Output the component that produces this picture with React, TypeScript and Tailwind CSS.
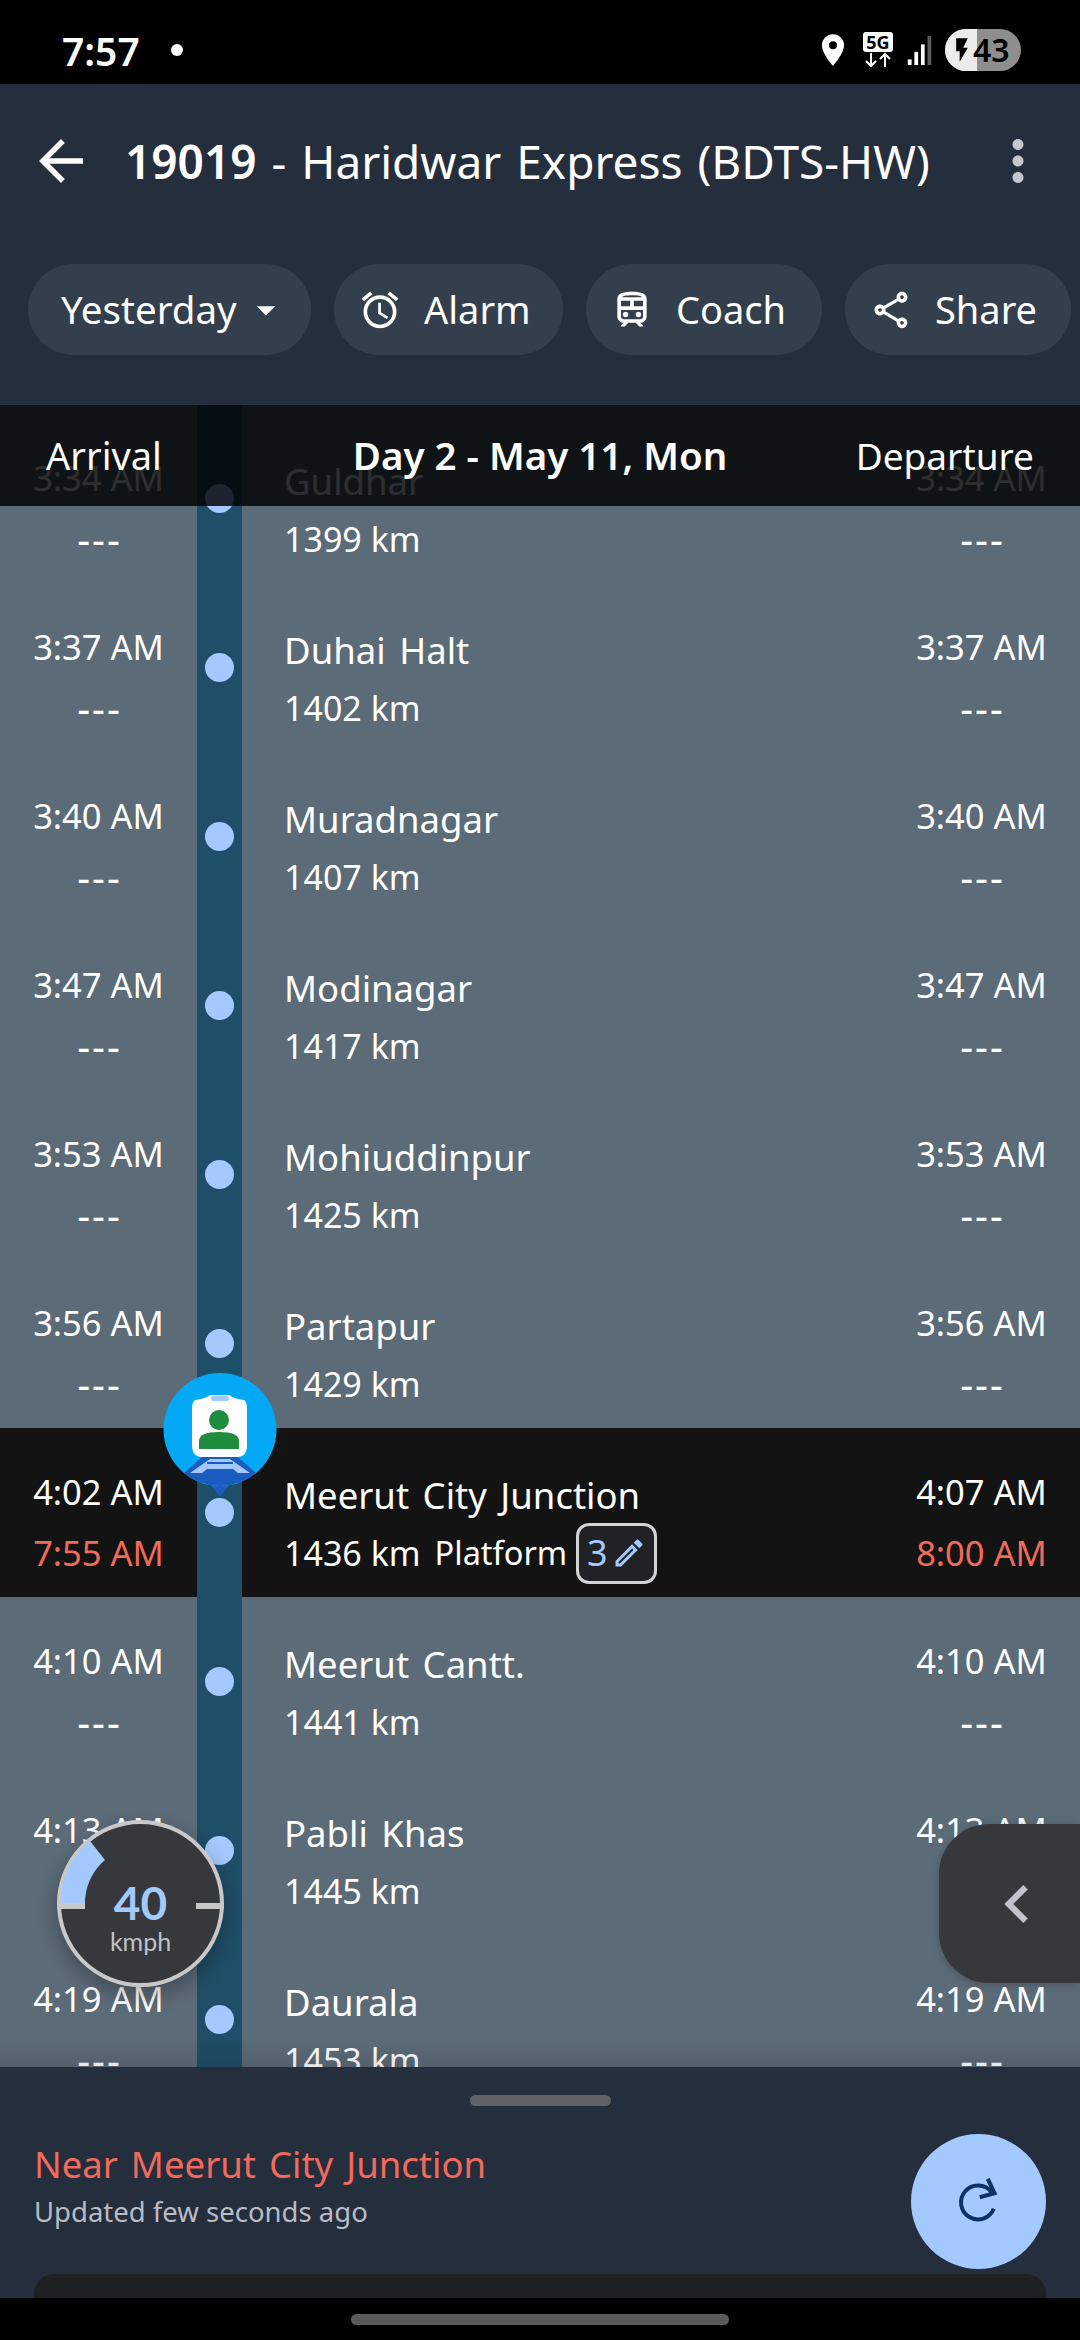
import {
  MdArrowBack,
  MdMoreVert,
  MdArrowDropDown,
  MdOutlineAccessAlarm,
  MdOutlineTrain,
  MdOutlineShare,
  MdOutlineEdit,
  MdLocationOn,
  MdFlashOn,
  MdChevronLeft,
} from "react-icons/md";

const stops = [
  { time: "3:34 AM", name: "Guldhar", km: "1399 km" },
  { time: "3:37 AM", name: "Duhai Halt", km: "1402 km" },
  { time: "3:40 AM", name: "Muradnagar", km: "1407 km" },
  { time: "3:47 AM", name: "Modinagar", km: "1417 km" },
  { time: "3:53 AM", name: "Mohiuddinpur", km: "1425 km" },
  { time: "3:56 AM", name: "Partapur", km: "1429 km" },
  {
    time: "4:02 AM",
    depart: "4:07 AM",
    actualIn: "7:55 AM",
    actualOut: "8:00 AM",
    name: "Meerut City Junction",
    km: "1436 km",
    current: true,
  },
  { time: "4:10 AM", name: "Meerut Cantt.", km: "1441 km" },
  { time: "4:13 AM", name: "Pabli Khas", km: "1445 km" },
  { time: "4:19 AM", name: "Daurala", km: "1453 km" },
];

const chips = [
  { icon: MdOutlineAccessAlarm, label: "Alarm", w: "w-[229px]" },
  { icon: MdOutlineTrain, label: "Coach", w: "w-[236px]" },
  { icon: MdOutlineShare, label: "Share", w: "w-[226px]" },
];

const StatusBar = () => (
  <div className="h-[84px] bg-black flex items-center pt-[16px] pl-[62px] pr-[59px] text-white">
    <span className="text-[39px] font-semibold leading-none">7:57</span>
    <span className="ml-[31px] w-[12px] h-[12px] rounded-full bg-white" />
    <div className="ml-auto flex items-center">
      <MdLocationOn className="w-[38px] h-[38px]" />
      <div className="ml-[9px] flex flex-col items-center w-[34px]">
        <span className="bg-white text-black text-[18px] font-bold leading-[20px] rounded-[3px] px-[3px]">
          5G
        </span>
        <svg width="30" height="16" viewBox="0 0 30 16" fill="none" stroke="white" strokeWidth="2">
          <path d="M8 1v13M3 9l5 5 5-5M22 15V2M17 7l5-5 5 5" />
        </svg>
      </div>
      <svg className="ml-[11px]" width="28" height="30" viewBox="0 0 28 32">
        <rect x="1" y="26" width="4" height="6" fill="white" />
        <rect x="8" y="18" width="4" height="14" fill="white" />
        <rect x="15" y="10" width="4" height="22" fill="white" />
        <rect x="22" y="1" width="4" height="31" fill="#5a5a5a" />
      </svg>
      <div className="ml-[11px] w-[76px] h-[42px] rounded-full overflow-hidden relative flex items-center bg-[#8e8e8e]">
        <div className="w-[32px] h-full bg-[#ececec]" />
        <MdFlashOn className="absolute left-[3px] w-[28px] h-[28px] text-black" />
        <span className="absolute left-[28px] text-black text-[32px] font-semibold leading-none">43</span>
      </div>
    </div>
  </div>
);

const Header = () => (
  <div className="h-[321px] bg-[#252e3d] text-white">
    <div className="h-[154px] flex items-center pl-[28px] pr-[29px]">
      <MdArrowBack className="w-[66px] h-[66px] shrink-0" />
      <h1 className="ml-[31px] text-[46px] leading-none whitespace-nowrap [word-spacing:3px]">
        <span className="font-semibold">19019</span> - Haridwar Express (BDTS-HW)
      </h1>
      <MdMoreVert className="ml-auto w-[66px] h-[66px] shrink-0 text-[#c4c8ce]" />
    </div>
    <div className="mt-[26px] flex pl-[28px] gap-[23px] overflow-hidden">
      <div className="w-[283px] h-[91px] shrink-0 rounded-full bg-[#343f4d] flex items-center pl-[33px] text-[38.5px]">
        Yesterday
        <MdArrowDropDown className="ml-[7px] w-[44px] h-[44px]" />
      </div>
      {chips.map((chip) => {
        const Icon = chip.icon;
        return (
          <div
            key={chip.label}
            className={`${chip.w} h-[91px] shrink-0 rounded-full bg-[#343f4d] flex items-center pl-[24px] text-[38px]`}
          >
            <Icon className="w-[44px] h-[44px]" />
            <span className="ml-[22px]">{chip.label}</span>
          </div>
        );
      })}
    </div>
  </div>
);

const Row = ({ stop }: { stop: (typeof stops)[number] }) => {
  const rowBg = stop.current ? "bg-[#131313]" : "bg-[#5c6b78]";
  const lowerText = stop.current ? "text-[34.5px] text-[#f26a5b]" : "text-[40px] tracking-[2px] pl-[2px]";
  return (
    <div className={`h-[169px] shrink-0 grid grid-cols-[197px_45px_1fr_197px] text-white ${rowBg}`}>
      <div className="flex flex-col items-center pl-[34px] pr-[34px]">
        <span className="mt-[44px] text-[34.5px] leading-[40px] whitespace-nowrap">{stop.time}</span>
        <span className={`mt-[21px] leading-[40px] whitespace-nowrap ${lowerText}`}>
          {stop.actualIn || "---"}
        </span>
      </div>
      <div className="bg-[#1f4e68] flex items-center justify-center">
        <span className="w-[29px] h-[29px] rounded-full bg-[#a3c9ff]" />
      </div>
      <div className="pl-[42px] flex flex-col">
        <span className="mt-[45px] text-[36.5px] leading-[44px] [word-spacing:4px]">{stop.name}</span>
        <div className="mt-[16px] h-[40px] flex items-center text-[34px] leading-[40px]">
          <span>{stop.km}</span>
          {stop.current && (
            <>
              <span className="ml-[14px] text-[32.5px]">Platform</span>
              <div className="ml-[9px] w-[81px] h-[61px] shrink-0 rounded-[13px] border-[3px] border-[#d4d4d4] bg-[#202226] flex items-center justify-center text-[#a3c9ff] text-[36px]">
                3
                <MdOutlineEdit className="ml-[3px] w-[36px] h-[36px]" />
              </div>
            </>
          )}
        </div>
      </div>
      <div className="flex flex-col items-center pl-[34px] pr-[34px]">
        <span className="mt-[44px] text-[34.5px] leading-[40px] whitespace-nowrap">{stop.depart || stop.time}</span>
        <span className={`mt-[21px] leading-[40px] whitespace-nowrap ${lowerText}`}>
          {stop.actualOut || "---"}
        </span>
      </div>
    </div>
  );
};

const TrainMarker = () => (
  <svg className="absolute left-[163px] top-[968px]" width="114" height="125" viewBox="0 0 114 125">
    <path d="M57 124 L46 110 Q52 112 57 112 Q62 112 68 110 Z" fill="#1a5cc0" />
    <circle cx="57" cy="56.5" r="56.5" fill="#03a9f4" />
    <path d="M21 100 L39 84 H75 L93 100 A56.5 56.5 0 0 1 21 100 Z" fill="#1a5cc0" />
    <path d="M27 100 L47 86 H67 L87 100 H75 L70 96 H44 L39 100 Z" fill="#a3c9ff" />
    <path d="M44 91 H70 V89 H44 Z" fill="#1a5cc0" />
    <path d="M32 27 Q42 26 47 22 H66 Q71 26 81 27 Q84 29 84 36 V72 Q84 84 74 84 H39 Q29 84 29 72 V36 Q29 29 32 27 Z" fill="white" />
    <rect x="48" y="23" width="18" height="5" rx="2.5" fill="#a3c9ff" />
    <circle cx="56" cy="47" r="10" fill="#1f8c3e" />
    <path d="M36 76 V68 Q36 59 56 59 Q76 59 76 68 V76 Z" fill="#1f8c3e" />
  </svg>
);

const Speedometer = () => (
  <div className="absolute left-[57px] top-[1415px] w-[167px] h-[167px] rounded-full bg-[#36383b] border-[4px] border-[#c8c8c8] shadow-[0_8px_20px_rgba(0,0,0,0.3)] flex flex-col items-center font-['Lato',sans-serif]">
    <svg className="absolute -left-[4px] -top-[4px]" width="167" height="167" viewBox="0 0 167 167">
      <path d="M3.5 85 A80 80 0 0 1 33 21 L48 40 A56 56 0 0 0 28 85 Z" fill="#a3c9ff" />
      <rect x="0" y="83" width="28" height="6" fill="#c8c8c8" />
      <rect x="139" y="83" width="29" height="6" fill="#c8c8c8" />
    </svg>
    <span className="mt-[56px] text-[46px] font-bold leading-[46px] text-[#a3c9ff] relative">40</span>
    <span className="text-[25px] leading-[30px] text-[#c0c2c8] relative">kmph</span>
  </div>
);

const SideTab = () => (
  <div className="absolute right-0 top-[1419px] w-[141px] h-[159px] rounded-l-[50px] bg-[#36383b] shadow-[0_2px_10px_rgba(0,0,0,0.2)] flex items-center pl-[40px]">
    <MdChevronLeft className="w-[76px] h-[76px] text-[#c0c2cc]" />
  </div>
);

const Timetable = () => (
  <div className="relative h-[1662px] overflow-hidden flex flex-col">
    <div className="h-[9px] shrink-0 bg-[#5c6b78] grid grid-cols-[197px_45px_1fr]">
      <div />
      <div className="bg-[#1f4e68]" />
    </div>
    {stops.map((stop) => (
      <Row key={stop.name} stop={stop} />
    ))}
    <div className="absolute inset-x-0 top-0 h-[101px] bg-black/[.82] grid grid-cols-[1fr_auto_1fr] items-center text-white px-[46px]">
      <span className="text-[38px] whitespace-nowrap">Arrival</span>
      <span className="text-[38.5px] font-semibold whitespace-nowrap">Day 2 - May 11, Mon</span>
      <span className="text-[37px] text-right whitespace-nowrap">Departure</span>
    </div>
    <div className="absolute inset-x-0 bottom-0 h-[30px] bg-gradient-to-b from-transparent to-black/10" />
    <TrainMarker />
    <Speedometer />
    <SideTab />
  </div>
);

const BottomSheet = () => (
  <div className="h-[231px] bg-[#252e3d] relative overflow-hidden">
    <div className="mx-auto mt-[28px] w-[141px] h-[11px] rounded-full bg-[#5f6368]" />
    <div className="pl-[34px] mt-[36px]">
      <p className="text-[36.5px] leading-[44px] text-[#f26a5b] [word-spacing:3.5px]">Near Meerut City Junction</p>
      <p className="mt-[8px] text-[27.5px] leading-[36px] text-[#b8bcc4]">Updated few seconds ago</p>
    </div>
    <div className="absolute left-[34px] right-[34px] top-[207px] h-[40px] rounded-t-[20px] bg-[#1f2022]" />
    <div className="absolute left-[911px] top-[67px] w-[135px] h-[135px] rounded-full bg-[#a3c9ff] flex items-center justify-center">
      <svg width="100" height="100" viewBox="0 0 100 100" fill="none" stroke="#0a3560" strokeWidth="4">
        <path d="M64.8 56.8 A17 17 0 1 1 62.5 40" />
        <path d="M58.8 26.8 L65.5 41.2 L50.8 45.2" />
      </svg>
    </div>
  </div>
);

const App = () => {
  return (
    <div className="w-[1080px] h-[2340px] overflow-hidden flex flex-col bg-black font-['Noto_Sans',sans-serif]">
      <StatusBar />
      <Header />
      <Timetable />
      <BottomSheet />
      <div className="h-[42px] bg-black flex justify-center pt-[16px]">
        <div className="w-[378px] h-[11px] rounded-full bg-[#5a5a5a]" />
      </div>
    </div>
  );
};

export default App;
